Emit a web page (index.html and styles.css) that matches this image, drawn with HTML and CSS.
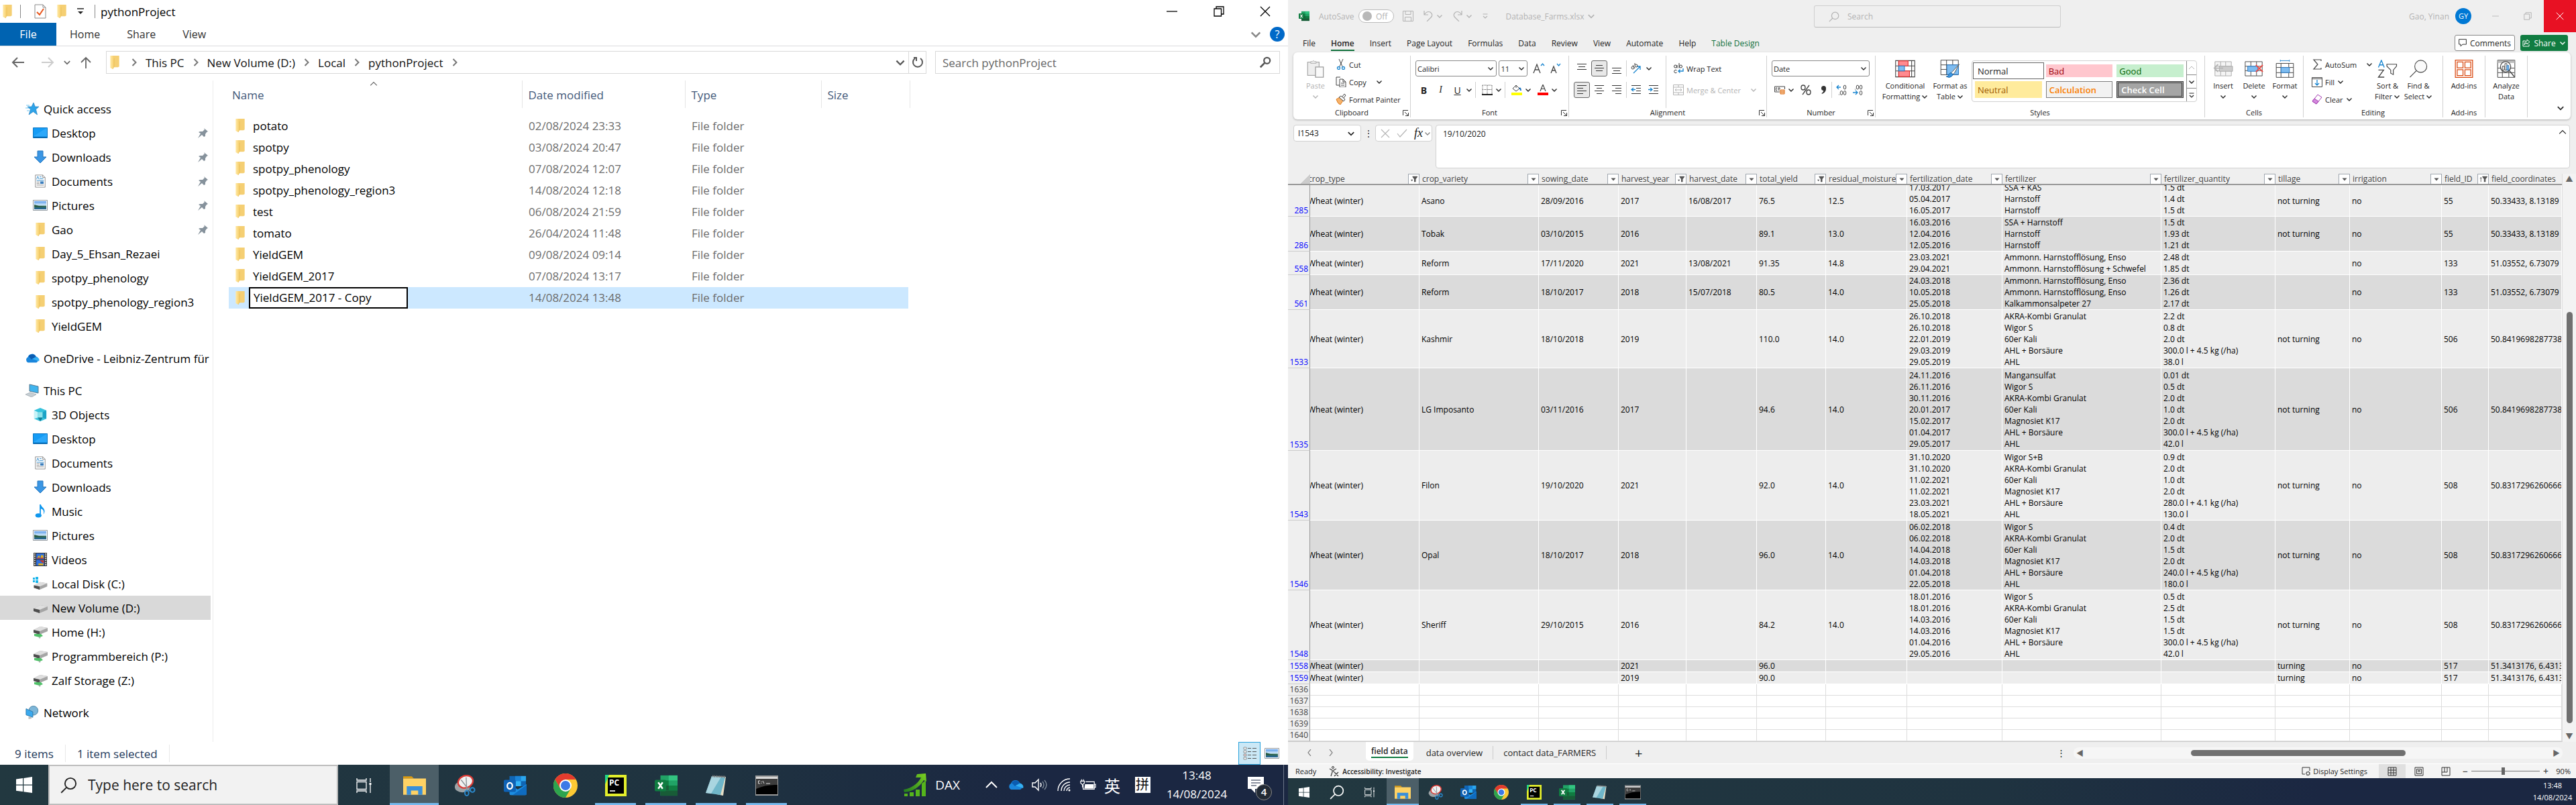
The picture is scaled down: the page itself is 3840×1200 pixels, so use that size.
FILE: index.html
```html
<!DOCTYPE html>
<html lang="en">
<head>
<meta charset="utf-8">
<title>pythonProject</title>
<link rel="stylesheet" href="styles.css">
</head>
<body>
<svg class="defs" aria-hidden="true">
  <linearGradient id="g-folder" x1="0" x2="1" y1="0" y2="0"><stop offset="0" stop-color="#ffe9a6"/><stop offset="1" stop-color="#f6cd68"/></linearGradient>
  <linearGradient id="g-sky" x1="0" x2="0" y1="0" y2="1"><stop offset="0" stop-color="#5a9bea"/><stop offset=".5" stop-color="#d6ebfa"/><stop offset=".6" stop-color="#3c7a6a"/><stop offset="1" stop-color="#1f5f9a"/></linearGradient>
  <linearGradient id="g-dax" x1="0" x2="1" y1="1" y2="0"><stop offset="0" stop-color="#1f7a1f"/><stop offset="1" stop-color="#7ed321"/></linearGradient>
  <symbol id="folder" viewBox="0 0 14 21"><path d="M3 0h11v17l-2 1H5z" fill="#f5cf73"/><path d="M0 0h4l2 4v13l-2 4-4-2z" fill="url(#g-folder)"/><path d="M4 21l2-4V4" fill="none" stroke="#e8bc55" stroke-width=".7"/></symbol>
  <symbol id="check-doc" viewBox="0 0 18 22"><path d="M1 1h12l4 4v16H1z" fill="#fff" stroke="#8a8a8a"/><path d="M13 1v4h4" fill="none" stroke="#8a8a8a"/><path d="M4 12l4 4 6-9" fill="none" stroke="#e8541a" stroke-width="2"/></symbol>
  <symbol id="chev-d" viewBox="0 0 10 10"><path d="M1.500 3.500L5 7l3.500-3.500" fill="none" stroke="currentColor" stroke-width="1.400"/></symbol>
  <symbol id="chev-u" viewBox="0 0 10 10"><path d="M1 7l4-4 4 4" fill="none" stroke="currentColor"/></symbol>
  <symbol id="chev-l" viewBox="0 0 10 10"><path d="M7 0L3 5l4 5" fill="none" stroke="currentColor" stroke-width="1.200"/></symbol>
  <symbol id="chev-r" viewBox="0 0 10 10"><path d="M3 0l4 5-4 5" fill="none" stroke="currentColor" stroke-width="1.200"/></symbol>
  <symbol id="crumb" viewBox="0 0 8 12"><path d="M1.500 1l5 5-5 5" fill="none" stroke="currentColor" stroke-width="2"/></symbol>
  <symbol id="arrow-l" viewBox="0 0 20 16"><path d="M19 8H2M9 1L2 8l7 7" fill="none" stroke="currentColor" stroke-width="2"/></symbol>
  <symbol id="arrow-r" viewBox="0 0 20 16"><path d="M1 8h17M11 1l7 7-7 7" fill="none" stroke="currentColor" stroke-width="2"/></symbol>
  <symbol id="arrow-u" viewBox="0 0 16 18"><path d="M8 18V2M1 9l7-7 7 7" fill="none" stroke="currentColor" stroke-width="1.800"/></symbol>
  <symbol id="reload" viewBox="0 0 18 18"><path d="M13 3a7 7 0 1 1-8 0M3 2h4v5" fill="none" stroke="currentColor" stroke-width="2"/></symbol>
  <symbol id="lens" viewBox="0 0 20 20"><circle cx="12" cy="8" r="6.500" fill="none" stroke="currentColor" stroke-width="1.500"/><path d="M7.500 12.500L1 19" stroke="currentColor" stroke-width="1.500"/></symbol>
  <symbol id="lens-b" viewBox="0 0 20 20"><circle cx="13" cy="7" r="5" fill="none" stroke="currentColor" stroke-width="2.500"/><path d="M9 11l-7 7" stroke="currentColor" stroke-width="3"/></symbol>
  <symbol id="min" viewBox="0 0 16 16"><path d="M0 8h16" stroke="currentColor" stroke-width="1.300"/></symbol>
  <symbol id="restore" viewBox="0 0 16 16"><path d="M1 4h10.500v11H1zM4 4V1h11v11h-3.500" fill="none" stroke="currentColor" stroke-width="1.300"/></symbol>
  <symbol id="close" viewBox="0 0 16 16"><path d="M1 1l14 14M15 1L1 15" stroke="currentColor" stroke-width="1.300"/></symbol>
  <symbol id="star" viewBox="0 0 22 20"><path d="M13 1l2.300 6H21l-4.500 4 2 8-6-4.500L6 19l2.500-8L4 7h6z" fill="#2ea3e8" stroke="#1877b8" stroke-width=".6"/><path d="M2 5h5M1 9h5M3 13h4" stroke="#6fc3ef" stroke-width="1.200"/></symbol>
  <symbol id="desktop" viewBox="0 0 22 16"><path d="M.5.5h21v15H.5z" fill="#159cf5" stroke="#0c77c4"/><path d="M1 13L20 1h1v12z" fill="#43b4ff" opacity=".5"/><path d="M1 14.500h20" stroke="#0a5c9c"/></symbol>
  <symbol id="download" viewBox="0 0 20 20"><path d="M6 1h8v9h5l-9 9-9-9h5z" fill="#3a96e4" stroke="#2174bd"/></symbol>
  <symbol id="document" viewBox="0 0 18 22"><path d="M1 1h12l4 4v16H1z" fill="#fff" stroke="#8a8a8a"/><path d="M13 1v4h4" fill="none" stroke="#8a8a8a"/><path d="M3 8l2-5 2 5M8 4h3M8 7h6M3 10h12" stroke="#2b88c9" fill="none"/><path d="M3 12.500h5M3 15h5M3 17.500h12" stroke="#888"/><path d="M9 11.500h5.500v4H9z" fill="#3b7dbb"/></symbol>
  <symbol id="picture" viewBox="0 0 22 16"><path d="M.5.5h21v15H.5z" fill="#fff" stroke="#8f979e"/><path d="M2 2h18v12H2z" fill="url(#g-sky)"/><path d="M2 7l7 2 11 1v1H2z" fill="#285c44"/></symbol>
  <symbol id="pin" viewBox="0 0 16 15"><path d="M10 0l6 5-2 1-2 3v3l-2 1-3-3-6 5 4-7-3-2 2-1h4l3-3z" fill="#86929c"/></symbol>
  <symbol id="cloud" viewBox="0 0 24 16"><path d="M5 15a5 5 0 0 1 0-9 7 7 0 0 1 13-1 5.500 5.500 0 0 1 1 10z" fill="#1a86dc"/><path d="M6 5a7 7 0 0 1 12 0l-7 5z" fill="#0b5cb0"/><path d="M12 9l7-3a5 5 0 0 1 4 7z" fill="#35b0f2"/></symbol>
  <symbol id="pc" viewBox="0 0 22 20"><path d="M7 1l13 3v10L7 11z" fill="#40b4ee" stroke="#56788e"/><path d="M1 16l7-3 9 3-7 4z" fill="#c6ced3" stroke="#8e9aa2" stroke-width=".6"/></symbol>
  <symbol id="cube" viewBox="0 0 22 22"><path d="M11 0l10 4v14l-10 4-10-4V4z" fill="#37c2dc"/><path d="M1 4l6 3v9l-6 2z" fill="#c7f3f7"/><path d="M7 7h8v9H7z" fill="#8ee2ea"/><path d="M15 7l6-3v14l-6-2z" fill="#1ba3c6"/><path d="M7 16h8l-4 6z" fill="#137c95"/></symbol>
  <symbol id="music" viewBox="0 0 18 22"><ellipse cx="6" cy="18" rx="5" ry="3.500" fill="#0f97ee"/><path d="M8 0h2c1 5 7 6 6 12-.5 2-1 3-2 4 2-6-1-8-4-9v11H8z" fill="#0f97ee"/></symbol>
  <symbol id="video" viewBox="0 0 22 22"><path d="M0 0h22v22H0z" fill="#333"/><path d="M2 1v20M20 1v20" stroke="#eee" stroke-width="2" stroke-dasharray="2 1.500"/><path d="M4.500 1h13v9.500h-13zM4.500 11.500h13V21h-13z" fill="#2f6fdc"/><path d="M6 8l3-4 2 4zM12 4h4v5h-4z" fill="#e2b21c"/><path d="M5 9h12M12 13h4v3z" stroke="#c6312b" stroke-width="1.500" fill="#e2b21c"/><path d="M8 19h8" stroke="#e2b21c" stroke-width="3"/></symbol>
  <symbol id="disk" viewBox="0 0 22 18"><path d="M1 10l10-5 11 2v5l-12 5-9-3z" fill="#a5a5a5"/><path d="M1 10l10-5 11 2-12 5z" fill="#dedede"/><path d="M1 10l9 2v5l-9-3z" fill="#4e4e4e"/></symbol>
  <symbol id="cdisk" viewBox="0 0 22 20"><use href="#disk" y="3" width="22" height="17"/><path d="M0 1h3v3H0zM4 0h4v4H4zM0 5h3v3H0zM4 5h4v4H4z" fill="#19b4ea"/></symbol>
  <symbol id="netdisk" viewBox="0 0 22 20"><use href="#disk" y="-3" width="22" height="18"/><path d="M2 13h10l3 3-5 2-8-2z" fill="#4fc168"/><path d="M8 17l4 1-2 2z" fill="#a4b2a8"/></symbol>
  <symbol id="network" viewBox="0 0 22 22"><circle cx="13" cy="8" r="7.500" fill="#7db6d8" stroke="#457f9f"/><path d="M1 5l11 5v9L1 15z" fill="#3aa9ee" stroke="#2c76a6"/><path d="M5 18l5 1v2l-5 1z" fill="#bbb"/></symbol>
  <symbol id="details" viewBox="0 0 22 22"><path d="M2 2h4v3H2zM2 7h4v3H2zM2 12h4v3H2zM2 17h4v3H2z" fill="#fff" stroke="#7a7a7a" stroke-width=".8"/><path d="M8 3.500h5m2 0h6M8 8.500h5m2 0h6M8 13.500h5m2 0h6M8 18.500h5m2 0h6" stroke="#555"/><path d="M3.500 13h1v1h-1z" fill="#c22"/></symbol>
  <symbol id="win" viewBox="0 0 24 24"><path d="M0 3.500l10-1.400v9.500H0zM11.200 1.900L24 0v11.600H11.200zM0 12.700h10v9.400L0 20.700zM11.200 12.700H24V24l-12.800-1.700z" fill="#fff"/></symbol>
  <symbol id="taskview" viewBox="0 0 24 24"><path d="M1 6.500h14v11H1zM1 1v3h14V1M1 23v-3h14v3M21 1v6M21 11v12" fill="none" stroke="#fff" stroke-width="1.300"/><path d="M19.500 8h3v3h-3z" fill="#fff"/></symbol>
  <symbol id="explorer" viewBox="0 0 32 28"><path d="M0 1h12l3 3H0z" fill="#d99a12"/><path d="M0 4h32v23H0z" fill="#ffd264"/><path d="M5 15h22v12h-6v-6h-10v6H5z" fill="#3a8fd9"/></symbol>
  <symbol id="snip" viewBox="0 0 34 34"><ellipse cx="13" cy="19" rx="12" ry="9" fill="#9da3a6"/><ellipse cx="18" cy="11" rx="12" ry="9.500" fill="#f1f1f1" stroke="#d83b36" stroke-width="2.500" transform="rotate(-20 18 11)"/><path d="M11 8l14 18M19 4l1 22" stroke="#8d9499" stroke-width="1.500"/><circle cx="29" cy="24" r="3.500" fill="none" stroke="#2a8bd0" stroke-width="2"/><ellipse cx="20" cy="29" rx="3" ry="4" fill="none" stroke="#2a8bd0" stroke-width="2"/></symbol>
  <symbol id="outlook" viewBox="0 0 36 32"><path d="M9 1h26v16H9z" fill="#1066b5"/><path d="M18 1h9v8h-9z" fill="#1a84d8"/><path d="M27 1h8v8h-8z" fill="#2aa6ee"/><path d="M18 9h9v8h-9z" fill="#32b4f8"/><path d="M9 14l13 8 14-8v15q0 2-2 2H11q-2 0-2-2z" fill="#1c8ee2"/><path d="M14 31l22-16v14q0 2-2 2z" fill="#0f6cc0"/><rect y="7" width="19" height="19" rx="2" fill="#0f62b4"/><ellipse cx="9.500" cy="16.500" rx="4" ry="4.800" fill="none" stroke="#fff" stroke-width="2.400"/></symbol>
  <symbol id="chrome" viewBox="0 0 36 36"><circle cx="18" cy="18" r="18" fill="#fcc934"/><path d="M18 9h15.600A18 18 0 0 0 2.400 9l7.800 13.500z" fill="#e33b2e"/><path d="M2.400 9A18 18 0 0 0 18 36l7.800-13.500h-15.600z" fill="#2da44e"/><circle cx="18" cy="18" r="9" fill="#fff"/><circle cx="18" cy="18" r="7" fill="#3c79e6"/></symbol>
  <symbol id="pycharm" viewBox="0 0 32 32"><path d="M0 0h32v32H0z" fill="#21d789"/><path d="M6 0h26v32H0V14z" fill="#e3ee2c"/><path d="M4 4h24v24H4z" fill="#000"/><path d="M7 24h8" stroke="#fff" stroke-width="1.600"/><text x="6" y="16" font-family="Open Sans, sans-serif" font-weight="700" font-size="12" fill="#fff">PC</text></symbol>
  <symbol id="excel" viewBox="0 0 36 32"><path d="M9 0h27v32H9z" fill="#21a366"/><path d="M22 0h14v8H22z" fill="#33c481"/><path d="M9 8h13v8H9z" fill="#107c41"/><path d="M9 16h27v8H9z" fill="#185c37"/><path d="M22 16h14v8H22z" fill="#107c41"/><path d="M9 24h27v8H9z" fill="#185c37"/><rect y="7" width="18" height="18" rx="2" fill="#107c41"/><path d="M5.500 11l7 10M12.500 11l-7 10" stroke="#fff" stroke-width="2.600"/></symbol>
  <symbol id="notepad" viewBox="0 0 34 32"><path d="M11 2l20 1-4 28-10-2z" fill="#e6ddc5"/><path d="M10 2l20 2-7 26L1 27z" fill="#6fb6c9"/><path d="M10 2l14 1-15 25-8-1z" fill="#c2e3ea" opacity=".7"/><path d="M11 2l19 1" stroke="#777" stroke-width="3" stroke-dasharray="1.500 1"/></symbol>
  <symbol id="cmd" viewBox="0 0 34 28"><path d="M0 0h34v28H0z" fill="#000" stroke="#9a9a9a" stroke-width="2"/><path d="M1 1h32v3H1z" fill="#d7d7d7"/><path d="M1 4h32v9Q16 12 1 19z" fill="#3d3d3d"/><path d="M7 7H4.500v4H7M9 8v1M9 10v1M11 7l2 4M16 11h6" fill="none" stroke="#ddd"/></symbol>
  <symbol id="dax" viewBox="0 0 34 34"><path d="M0 24C13 22 22 14 26 6h-8l2-5 13-1 1 12-4-2C24 20 14 27 1 28z" fill="url(#g-dax)"/><path d="M1 30h5v4H1zM9 28h6v6H9zM18 24h6v10h-6zM27 15l6-5v24h-6z" fill="#55b51c"/></symbol>
  <symbol id="volume" viewBox="0 0 24 20"><path d="M1 7h4l5-5v16l-5-5H1z" fill="none" stroke="#fff" stroke-width="1.400"/><path d="M13 7q2 3 0 6" fill="none" stroke="#fff" stroke-width="1.400"/><path d="M16 5q4 5 0 10M19 3q6 7 0 14" fill="none" stroke="#7c8996" stroke-width="1.400"/></symbol>
  <symbol id="wifi" viewBox="0 0 20 20"><path d="M1 19A18 18 0 0 1 19 1M6 19A13 13 0 0 1 19 6M10 19a9 9 0 0 1 9-9M14 19a5 5 0 0 1 5-5" fill="none" stroke="#fff" stroke-width="1.400"/><circle cx="18" cy="18" r="1.500" fill="#fff"/></symbol>
  <symbol id="battery" viewBox="0 0 26 18"><path d="M9 4h14v12H5V9M23 8h2v5h-2M1 3h6v3l-3 3-3-3zM2.500 0v3M5.500 0v3M4 9v4" fill="none" stroke="#fff" stroke-width="1.300"/><path d="M8 8h14v7H7z" fill="#fff"/></symbol>
  <symbol id="note" viewBox="0 0 24 24"><path d="M0 0h24v18H11v6l-6-6H0z" fill="#fff"/><path d="M5 5h14M5 9h14M5 13h8" stroke="#1b2742"/></symbol>
  <symbol id="save" viewBox="0 0 16 16"><path d="M.5.500h15v15H.5zM4 .500v5h8v-5M3.500 15.500v-6h9v6" fill="none" stroke="currentColor"/></symbol>
  <symbol id="undo" viewBox="0 0 16 16"><path d="M2 0v6h6M2 6q4-6 9-4 5 4 1 8l-6 6" fill="none" stroke="currentColor" stroke-width="1.200"/></symbol>
  <symbol id="redo" viewBox="0 0 16 16"><path d="M14 0v6H8M14 6q-4-6-9-4-5 4-1 8l6 6" fill="none" stroke="currentColor" stroke-width="1.200"/></symbol>
  <symbol id="custom" viewBox="0 0 10 10"><path d="M1.500 2h7M2 5l3 3 3-3" fill="none" stroke="currentColor" stroke-width="1.200"/></symbol>
  <symbol id="quick" viewBox="0 0 10 10"><path d="M0 1h10" stroke="currentColor" stroke-width="1.500"/><path d="M1 5h8L5 9z" fill="currentColor"/></symbol>
  <symbol id="paste" viewBox="0 0 28 30"><path d="M1 4h19v22H1z" fill="#eee" stroke="#aaa" stroke-width="1.400"/><path d="M6 6V3h3q1-3 3 0h3v3z" fill="#eee" stroke="#aaa"/><path d="M14 12h13v17H14z" fill="#fafafa" stroke="#9c9c9c" stroke-width="1.400"/></symbol>
  <symbol id="cut" viewBox="0 0 16 16"><path d="M5 0l5.500 12M11 0L5.500 12" stroke="#444" fill="none"/><circle cx="4.500" cy="13.500" r="2" fill="none" stroke="#1a86d0" stroke-width="1.300"/><circle cx="11.500" cy="13.500" r="2" fill="none" stroke="#1a86d0" stroke-width="1.300"/></symbol>
  <symbol id="copy" viewBox="0 0 16 16"><path d="M6 13H1V1h6M6 4h5l4 4v8H6zM11 4v4h4M8 10h5M8 13h5" fill="none" stroke="#444"/></symbol>
  <symbol id="brush" viewBox="0 0 16 16"><path d="M1 8l5-3 5 5-4 6q-4-1-6-8z" fill="#f6b26b" stroke="#dd7a1a"/><path d="M5 5l3-2 6 5-2 3zM10 4l3-4 2 2-3 4" fill="#fff" stroke="#444"/></symbol>
  <symbol id="grow" viewBox="0 0 18 16"><path d="M1 15L6 2l5 13M3 10h6" fill="none" stroke="#444" stroke-width="1.300"/><path d="M12 4l2.500-3L17 4" fill="none" stroke="#1a86d0" stroke-width="1.300"/></symbol>
  <symbol id="shrink" viewBox="0 0 18 16"><path d="M2 15L6 5l4 10M3.500 11h5" fill="none" stroke="#444" stroke-width="1.300"/><path d="M11 1l2.500 3L16 1" fill="none" stroke="#1a86d0" stroke-width="1.300"/></symbol>
  <symbol id="borders" viewBox="0 0 16 16"><path d="M1 1h14v13M1 1v13M8 1v13M1 7.500h14" fill="none" stroke="#444" stroke-dasharray="1 1"/><path d="M0 15h16" stroke="#222" stroke-width="2"/></symbol>
  <symbol id="fill" viewBox="0 0 16 16"><path d="M7 1L2 6l5 4 5-4zM7 1v4" fill="none" stroke="#444"/><path d="M12 5q2 1 2 4" stroke="#1a70c0" stroke-width="2" fill="none"/><path d="M0 12h16v4H0z" fill="#ff0"/></symbol>
  <symbol id="fcolor" viewBox="0 0 16 16"><path d="M4 10l4-10 4 10M5.500 6.500h5" fill="none" stroke="#444" stroke-width="1.200"/><path d="M0 12h16v4H0z" fill="#f00"/></symbol>
  <symbol id="al-top" viewBox="0 0 16 16"><path d="M1 1.500h14M3 5.500h10M1 9.500h14" stroke="#333"/></symbol>
  <symbol id="al-mid" viewBox="0 0 16 16"><path d="M3 3.500h10M1 7.500h14M3 11.500h10" stroke="#333"/></symbol>
  <symbol id="al-bot" viewBox="0 0 16 16"><path d="M1 7.500h14M3 11.500h10M1 15.500h14" stroke="#333"/></symbol>
  <symbol id="al-l" viewBox="0 0 16 16"><path d="M1 1.500h14M1 5.500h9M1 9.500h14M1 13.500h9" stroke="#333"/></symbol>
  <symbol id="al-c" viewBox="0 0 16 16"><path d="M1 1.500h14M4 5.500h8M1 9.500h14M4 13.500h8" stroke="#333"/></symbol>
  <symbol id="al-r" viewBox="0 0 16 16"><path d="M1 1.500h14M6 5.500h9M1 9.500h14M6 13.500h9" stroke="#333"/></symbol>
  <symbol id="orient" viewBox="0 0 16 16"><path d="M4 15L14 5M9 5h5v5" fill="none" stroke="#1a86d0" stroke-width="1.300"/><circle cx="3" cy="7" r="2" fill="none" stroke="#444"/><circle cx="8" cy="4" r="2" fill="none" stroke="#444"/><path d="M3 3l3 5M6 0v3" stroke="#444"/></symbol>
  <symbol id="outdent" viewBox="0 0 16 16"><path d="M1 1.500h14M8 5.500h7M8 9.500h7M1 13.500h14" stroke="#333"/><path d="M7 7.500H1M4 5L1 7.500 4 10" fill="none" stroke="#1a86d0" stroke-width="1.300"/></symbol>
  <symbol id="indent" viewBox="0 0 16 16"><path d="M1 1.500h14M8 5.500h7M8 9.500h7M1 13.500h14" stroke="#333"/><path d="M0 7.500h6M3 5l3 2.500L3 10" fill="none" stroke="#1a86d0" stroke-width="1.300"/></symbol>
  <symbol id="wrap" viewBox="0 0 16 16"><circle cx="3.500" cy="5" r="2" fill="none" stroke="#333"/><path d="M6 3v4.500M9 0v7.500M5.500 11a2.200 2.200 0 1 0 0 3" stroke="#333" fill="none"/><circle cx="11.500" cy="5" r="2" fill="none" stroke="#333"/><path d="M15 8v4H8M10.500 9.500L8 12l2.500 2.500" fill="none" stroke="#1a86d0" stroke-width="1.400"/></symbol>
  <symbol id="merge" viewBox="0 0 16 16"><path d="M.5.500h15v15H.5zM.5 4h15M.5 12h15M8 0v4M8 12v4M3 8h10M5 6L3 8l2 2M11 6l2 2-2 2" fill="none" stroke="currentColor"/></symbol>
  <symbol id="money" viewBox="0 0 16 16"><path d="M.5 3h15v8H.5z" fill="none" stroke="#444"/><path d="M4 5H2.500v4H4M6 9V5h2v4" fill="none" stroke="#444"/><path d="M8 7h8v8H8z" fill="#fff"/><path d="M9 8h6v6H9zM9 10h6M9 12h6" fill="#fde3c8" stroke="#dd6b10"/></symbol>
  <symbol id="percent" viewBox="0 0 16 16"><ellipse cx="4" cy="4.500" rx="3" ry="3.500" fill="none" stroke="#444" stroke-width="1.400"/><ellipse cx="12" cy="11.500" rx="3" ry="3.500" fill="none" stroke="#444" stroke-width="1.400"/><path d="M13 1L3 15" stroke="#444" stroke-width="1.300"/></symbol>
  <symbol id="comma" viewBox="0 0 16 16"><circle cx="8.500" cy="5.500" r="3.500" fill="#333"/><path d="M12 6q0 6-6 8l-.5-1q3-2 3-5z" fill="#333"/></symbol>
  <symbol id="dec-more" viewBox="0 0 16 16"><path d="M7 4H1M4 1L1 4l3 3" fill="none" stroke="#1a86d0" stroke-width="1.300"/><ellipse cx="13" cy="4" rx="1.800" ry="3" fill="none" stroke="#444"/><ellipse cx="8" cy="12.500" rx="1.800" ry="3" fill="none" stroke="#444"/><ellipse cx="13" cy="12.500" rx="1.800" ry="3" fill="none" stroke="#444"/><path d="M4 15h1" stroke="#444"/></symbol>
  <symbol id="dec-less" viewBox="0 0 16 16"><path d="M1 12h7M5 9l3 3-3 3" fill="none" stroke="#1a86d0" stroke-width="1.300"/><ellipse cx="13" cy="4" rx="1.800" ry="3" fill="none" stroke="#444"/><ellipse cx="8" cy="4" rx="1.800" ry="3" fill="none" stroke="#444"/><ellipse cx="13" cy="12.500" rx="1.800" ry="3" fill="none" stroke="#444"/><path d="M4 7h1" stroke="#444"/></symbol>
  <symbol id="launch" viewBox="0 0 9 9"><path d="M.5 8V.500H8M3 3l5 5M8.500 4v4.500H4" fill="none" stroke="#333"/></symbol>
  <symbol id="cond" viewBox="0 0 28 24"><path d="M.7.700h26.600v22.600H.7zM.7 8h26.600M.7 15h26.600M5 .700V23M23 .700V23" fill="#fff" stroke="#444"/><path d="M5 1h13v7H5zM5 15h15v8H5z" fill="#ff8a8f" stroke="#e02b2b"/><path d="M5 8h8v7H5z" fill="#7ebcf0" stroke="#2b78c0"/></symbol>
  <symbol id="ftable" viewBox="0 0 30 28"><path d="M.7.700h27v22.600H.7zM.7 8h27M.7 15h27M9.500 .700V23M19 .700V23" fill="#fff" stroke="#444"/><path d="M10 8h18v15H10z" fill="#7ebcf0" stroke="#2b78c0"/><path d="M29 7L19 18l-3 3 3 2 3-3z" fill="#fff" stroke="#555"/><path d="M16 20q-3 1-4 5-2 1-3 1 5 3 8 0 3-2 2-4z" fill="#3c95e0" stroke="#1a67a8"/></symbol>
  <symbol id="insert" viewBox="0 0 32 24"><path d="M3 .7h26v22.600H3zM3 8h26M3 15h26M12 .7V23M20 .7V23" fill="#f4f4f4" stroke="#aaa"/><path d="M10 8h21v8H10z" fill="#ccc" stroke="#aaa"/><path d="M16 11H2M8 5l-6 6 6 6" fill="none" stroke="#b4b4b4" stroke-width="2"/></symbol>
  <symbol id="delete" viewBox="0 0 32 24"><path d="M2 .7h27v22.600H2zM2 8h27M2 15h27M11 .7V23M20 .7V23" fill="#fff" stroke="#444"/><path d="M6 8h16v8H6z" fill="#7ebcf0" stroke="#2b78c0"/><path d="M19 6l11 11M30 6L19 17" stroke="#ee4a43" stroke-width="2"/></symbol>
  <symbol id="format" viewBox="0 0 28 28"><path d="M.7 5.700h26.600v21.600H.7zM.7 12h26.600M.7 20h26.600M8 5.700V27M20 5.700V27" fill="#fff" stroke="#444"/><path d="M8 12h13v8H8z" fill="#7ebcf0" stroke="#2b78c0"/><path d="M7 1.500h14M7 0v3M21 0v3" stroke="#2b88d0"/></symbol>
  <symbol id="sigma" viewBox="0 0 16 16"><path d="M14 3V1H3l6 7-6 7h11v-2" fill="none" stroke="#444" stroke-width="1.200"/></symbol>
  <symbol id="filldown" viewBox="0 0 16 16"><path d="M.5 1.500h15v14H.5zM.5 3.500h15" fill="none" stroke="#444"/><path d="M8 5v8M5 10l3 3 3-3" fill="none" stroke="#1a86d0" stroke-width="1.300"/></symbol>
  <symbol id="eraser" viewBox="0 0 16 16"><path d="M9 1l6 4-8 10-6-4z" fill="#fff" stroke="#a33bb0"/><path d="M4 7l6 4-3 4-6-4z" fill="#d48ade" stroke="#a33bb0"/></symbol>
  <symbol id="sort" viewBox="0 0 30 28"><path d="M1 12L5.500 1 10 12M3 8h5" fill="none" stroke="#1a86d0" stroke-width="1.400"/><path d="M1 16h8L1 27h9" fill="none" stroke="#444" stroke-width="1.400"/><path d="M14 7h15v3l-5 6v7l-4-2v-5l-6-6z" fill="#fff" stroke="#444" stroke-width="1.200"/></symbol>
  <symbol id="find" viewBox="0 0 30 30"><circle cx="19" cy="11" r="10" fill="#fafafa" stroke="#444" stroke-width="1.200"/><path d="M12 18L1 29" stroke="#444" stroke-width="1.300"/></symbol>
  <symbol id="addins" viewBox="0 0 28 28"><path d="M.7.700h26.600v26.600H.7zM3.500 3.500h9v9h-9zM15.500 3.500h9v9h-9zM3.500 15.500h9v9h-9zM15.500 15.500h9v9h-9z" fill="none" stroke="#d9480f" stroke-width="1.300"/></symbol>
  <symbol id="analyze" viewBox="0 0 28 28"><path d="M.7.700h26.600v26.600H.7zM.7 13h26M.7 20h26M8 5v22M18 5v22" fill="#fff" stroke="#444"/><path d="M1 1h26v4H1z" fill="#bbb"/><circle cx="13" cy="11" r="8" fill="#fff" stroke="#444" stroke-width="1.300"/><path d="M19 17l8 10" stroke="#444" stroke-width="1.500"/><path d="M8 10h3v6H8zM12 6h3v10h-3z" fill="#fff" stroke="#444"/><path d="M15 9h3v7h-3z" fill="#7ebcf0" stroke="#2b78c0"/></symbol>
  <symbol id="bubble" viewBox="0 0 12 12"><path d="M.6.600h10.800v7.500H6L3 11V8H.6z" fill="none" stroke="#333"/></symbol>
  <symbol id="share" viewBox="0 0 12 12"><path d="M5 3H1v8h9V8M7 1l4 3.500L7 8V6q-3 0-4 3 0-5 4-6z" fill="none" stroke="#fff"/></symbol>
  <symbol id="x-ico" viewBox="0 0 14 14"><path d="M1 1l12 12M13 1L1 13" stroke="#b5b5b5" stroke-width="1.200"/></symbol>
  <symbol id="v-ico" viewBox="0 0 16 14"><path d="M1 7l4 5L15 1" fill="none" stroke="#b5b5b5" stroke-width="1.200"/></symbol>
  <symbol id="dd" viewBox="0 0 10 10"><path d="M1.500 3.500h7L5 7.500z" fill="#555"/></symbol>
  <symbol id="funnel" viewBox="0 0 14 12"><path d="M4 1h9v1l-3 4v5H7V6L4 2z" fill="#555"/><path d="M1 7l4 0-2 3z" fill="#555"/></symbol>
  <symbol id="funnel-s" viewBox="0 0 14 12"><path d="M5 1h9v1l-3 4v5H8V6L5 2z" fill="#555"/><path d="M2.500 11V3M1 5l1.500-2L4 5" fill="none" stroke="#555"/></symbol>
  <symbol id="access" viewBox="0 0 16 16"><circle cx="6" cy="2" r="1.500" fill="none" stroke="#333"/><path d="M1 4l4 2v3l-2 6M11 4L7 6v3M8 9l6 6M14 9l-6 6" fill="none" stroke="#333" stroke-width="1.200"/></symbol>
  <symbol id="display" viewBox="0 0 14 14"><path d="M5 11H1V1h11v5" fill="none" stroke="#333"/><circle cx="9.500" cy="10" r="2.500" fill="none" stroke="#333" stroke-width="1.600" stroke-dasharray="1.600 .6"/></symbol>
  <symbol id="v-grid" viewBox="0 0 14 14"><path d="M1 1h12v12H1zM1 5h12M1 9h12M5 1v12M9 1v12" fill="none" stroke="#333"/></symbol>
  <symbol id="v-page" viewBox="0 0 14 14"><path d="M1 1h12v12H1zM3.500 3.500h7v7h-7zM5 5.500h4M5 7.500h4" fill="none" stroke="#333"/></symbol>
  <symbol id="v-break" viewBox="0 0 14 14"><path d="M1 1h12v12H1zM5 1v7h4V1M1 8h4" fill="none" stroke="#333"/></symbol>
</svg>

<main class="screens">
<section class="screen">
  <div class="explorer">
    <header class="x-title">
      <svg class="i-folder"><use href="#folder"/></svg><i class="tick"></i>
      <svg class="i-doc"><use href="#check-doc"/></svg>
      <svg class="i-folder"><use href="#folder"/></svg>
      <svg class="i-10 dark"><use href="#quick"/></svg><i class="tick"></i>
      <h1>pythonProject</h1>
      <div class="win-controls">
        <button aria-label="Minimize"><svg class="i-16"><use href="#min"/></svg></button>
        <button aria-label="Restore"><svg class="i-16"><use href="#restore"/></svg></button>
        <button aria-label="Close"><svg class="i-16"><use href="#close"/></svg></button>
      </div>
    </header>
    <nav class="x-tabs">
      <button class="file">File</button><button>Home</button><button>Share</button><button>View</button>
      <span class="x-help"><svg class="i-18"><use href="#chev-d"/></svg><button class="help" aria-label="Help">?</button></span>
    </nav>
    <div class="x-address">
      <div class="x-nav">
        <button aria-label="Back"><svg class="i-20"><use href="#arrow-l"/></svg></button>
        <button aria-label="Forward" class="off"><svg class="i-20"><use href="#arrow-r"/></svg></button>
        <button aria-label="Recent" class="slim"><svg class="i-12"><use href="#chev-d"/></svg></button>
        <button aria-label="Up" class="slim"><svg class="i-18"><use href="#arrow-u"/></svg></button>
      </div>
      <div class="x-path">
        <svg class="i-folder"><use href="#folder"/></svg>
        <svg class="crumb"><use href="#crumb"/></svg><a href="#pc">This PC</a>
        <svg class="crumb"><use href="#crumb"/></svg><a href="#d">New Volume (D:)</a>
        <svg class="crumb"><use href="#crumb"/></svg><a href="#local">Local</a>
        <svg class="crumb"><use href="#crumb"/></svg><a href="#project">pythonProject</a>
        <svg class="crumb"><use href="#crumb"/></svg>
        <svg class="i-16 push"><use href="#chev-d"/></svg>
        <button class="reload" aria-label="Refresh"><svg class="i-18"><use href="#reload"/></svg></button>
      </div>
      <label class="x-search"><input type="search" placeholder="Search pythonProject" aria-label="Search pythonProject"><svg class="i-18"><use href="#lens-b"/></svg></label>
    </div>
    <div class="x-body">
      <nav class="tree">
        <ul>
          <li class="root"><svg><use href="#star"/></svg>Quick access</li>
          <li><svg><use href="#desktop"/></svg>Desktop<svg class="pin"><use href="#pin"/></svg></li>
          <li><svg><use href="#download"/></svg>Downloads<svg class="pin"><use href="#pin"/></svg></li>
          <li><svg><use href="#document"/></svg>Documents<svg class="pin"><use href="#pin"/></svg></li>
          <li><svg><use href="#picture"/></svg>Pictures<svg class="pin"><use href="#pin"/></svg></li>
          <li><svg><use href="#folder"/></svg>Gao<svg class="pin"><use href="#pin"/></svg></li>
          <li><svg><use href="#folder"/></svg>Day_5_Ehsan_Rezaei</li>
          <li><svg><use href="#folder"/></svg>spotpy_phenology</li>
          <li><svg><use href="#folder"/></svg>spotpy_phenology_region3</li>
          <li><svg><use href="#folder"/></svg>YieldGEM</li>
        </ul>
        <ul><li class="root"><svg><use href="#cloud"/></svg>OneDrive - Leibniz-Zentrum für</li></ul>
        <ul>
          <li class="root"><svg><use href="#pc"/></svg>This PC</li>
          <li><svg><use href="#cube"/></svg>3D Objects</li>
          <li><svg><use href="#desktop"/></svg>Desktop</li>
          <li><svg><use href="#document"/></svg>Documents</li>
          <li><svg><use href="#download"/></svg>Downloads</li>
          <li><svg><use href="#music"/></svg>Music</li>
          <li><svg><use href="#picture"/></svg>Pictures</li>
          <li><svg><use href="#video"/></svg>Videos</li>
          <li><svg><use href="#cdisk"/></svg>Local Disk (C:)</li>
          <li class="current"><svg><use href="#disk"/></svg>New Volume (D:)</li>
          <li><svg><use href="#netdisk"/></svg>Home (H:)</li>
          <li><svg><use href="#netdisk"/></svg>Programmbereich (P:)</li>
          <li><svg><use href="#netdisk"/></svg>Zalf Storage (Z:)</li>
        </ul>
        <ul><li class="root"><svg><use href="#network"/></svg>Network</li></ul>
      </nav>
      <div class="files-pane">
        <table class="files">
          <colgroup><col class="f-name"><col class="f-date"><col class="f-type"><col class="f-size"></colgroup>
          <thead><tr><th>Name<svg class="sorted"><use href="#chev-u"/></svg></th><th>Date modified</th><th>Type</th><th>Size</th></tr></thead>
          <tbody>
            <tr><td><svg class="i-folder"><use href="#folder"/></svg>potato</td><td>02/08/2024 23:33</td><td>File folder</td><td></td></tr>
            <tr><td><svg class="i-folder"><use href="#folder"/></svg>spotpy</td><td>03/08/2024 20:47</td><td>File folder</td><td></td></tr>
            <tr><td><svg class="i-folder"><use href="#folder"/></svg>spotpy_phenology</td><td>07/08/2024 12:07</td><td>File folder</td><td></td></tr>
            <tr><td><svg class="i-folder"><use href="#folder"/></svg>spotpy_phenology_region3</td><td>14/08/2024 12:18</td><td>File folder</td><td></td></tr>
            <tr><td><svg class="i-folder"><use href="#folder"/></svg>test</td><td>06/08/2024 21:59</td><td>File folder</td><td></td></tr>
            <tr><td><svg class="i-folder"><use href="#folder"/></svg>tomato</td><td>26/04/2024 11:48</td><td>File folder</td><td></td></tr>
            <tr><td><svg class="i-folder"><use href="#folder"/></svg>YieldGEM</td><td>09/08/2024 09:14</td><td>File folder</td><td></td></tr>
            <tr><td><svg class="i-folder"><use href="#folder"/></svg>YieldGEM_2017</td><td>07/08/2024 13:17</td><td>File folder</td><td></td></tr>
            <tr class="selected"><td><svg class="i-folder"><use href="#folder"/></svg><input class="rename" value="YieldGEM_2017 - Copy" aria-label="Folder name"></td><td>14/08/2024 13:48</td><td>File folder</td><td></td></tr>
          </tbody>
        </table>
      </div>
    </div>
    <footer class="x-status">
      <span>9 items</span><span>1 item selected</span>
      <div class="x-views"><button class="on" aria-label="Details"><svg><use href="#details"/></svg></button><button aria-label="Large icons"><svg><use href="#picture"/></svg></button></div>
    </footer>
  </div>
  <footer class="taskbar">
    <button class="start" aria-label="Start"><svg class="i-24"><use href="#win"/></svg></button>
    <label class="t-search"><svg><use href="#lens"/></svg><input type="search" placeholder="Type here to search" aria-label="Type here to search"></label>
    <div class="apps">
      <button aria-label="Task view"><svg class="i-24"><use href="#taskview"/></svg></button>
      <button class="active" aria-label="File Explorer"><svg><use href="#explorer"/></svg></button>
      <button aria-label="Snipping Tool"><svg><use href="#snip"/></svg></button>
      <button aria-label="Outlook"><svg><use href="#outlook"/></svg></button>
      <button aria-label="Chrome"><svg class="i-36"><use href="#chrome"/></svg></button>
      <button class="open" aria-label="PyCharm"><svg><use href="#pycharm"/></svg></button>
      <button class="open" aria-label="Excel"><svg><use href="#excel"/></svg></button>
      <button class="open" aria-label="Notepad"><svg><use href="#notepad"/></svg></button>
      <button class="open" aria-label="Command Prompt"><svg><use href="#cmd"/></svg></button>
    </div>
    <div class="tray">
      <button class="dax"><svg><use href="#dax"/></svg>DAX</button>
      <button aria-label="Hidden icons"><svg class="i-20"><use href="#chev-u"/></svg></button>
      <button aria-label="OneDrive"><svg class="i-24"><use href="#cloud"/></svg></button>
      <button aria-label="Volume"><svg class="i-24"><use href="#volume"/></svg></button>
      <button aria-label="Network"><svg class="i-20"><use href="#wifi"/></svg></button>
      <button aria-label="Battery"><svg class="i-24"><use href="#battery"/></svg></button>
      <button class="ime">英</button>
      <button class="ime2"><span>拼</span></button>
      <div class="clock"><span>13:48</span><span>14/08/2024</span></div>
      <button class="notes" aria-label="Notifications"><svg class="i-24"><use href="#note"/></svg><b>4</b></button>
    </div>
  </footer>
</section>

<section class="screen">
  <div class="excel">
    <header class="e-title">
      <div class="e-quick">
        <svg class="i-16"><use href="#excel"/></svg>
        <label class="autosave">AutoSave<span class="switch"><input type="checkbox"><i></i>Off</span></label>
        <svg class="i-16"><use href="#save"/></svg>
        <span class="pair"><svg class="i-16"><use href="#undo"/></svg><svg class="i-10"><use href="#chev-d"/></svg></span>
        <span class="pair"><svg class="i-16"><use href="#redo"/></svg><svg class="i-10"><use href="#chev-d"/></svg></span>
        <svg class="i-10"><use href="#custom"/></svg>
        <span class="doc-name">Database_Farms.xlsx<svg class="i-12"><use href="#chev-d"/></svg></span>
      </div>
      <label class="e-search"><svg class="i-16"><use href="#lens"/></svg><input type="search" placeholder="Search" aria-label="Search"></label>
      <div class="e-user">
        Gao, Yinan<span class="avatar">GY</span>
        <button aria-label="Minimize"><svg class="i-10"><use href="#min"/></svg></button>
        <button aria-label="Restore"><svg class="i-12"><use href="#restore"/></svg></button>
        <button class="shut" aria-label="Close"><svg class="i-12"><use href="#close"/></svg></button>
      </div>
    </header>
    <nav class="e-tabs">
      <button>File</button><button class="on">Home</button><button>Insert</button><button>Page Layout</button><button>Formulas</button><button>Data</button><button>Review</button><button>View</button><button>Automate</button><button>Help</button><button class="context">Table Design</button>
      <div class="e-share"><button class="comments"><svg class="i-12"><use href="#bubble"/></svg>Comments</button><button class="share"><svg class="i-12"><use href="#share"/></svg>Share<svg class="i-10"><use href="#chev-d"/></svg></button></div>
    </nav>
    <div class="ribbon">
      <div class="group g-clip">
        <div class="g-body">
          <button class="big off"><svg class="ic"><use href="#paste"/></svg>Paste<svg class="i-10"><use href="#chev-d"/></svg></button>
          <div class="stack">
            <button><svg class="i-16"><use href="#cut"/></svg>Cut</button>
            <button><svg class="i-16"><use href="#copy"/></svg>Copy<svg class="i-10 far"><use href="#chev-d"/></svg></button>
            <button><svg class="i-16"><use href="#brush"/></svg>Format Painter</button>
          </div>
        </div>
        <div class="g-label">Clipboard<svg><use href="#launch"/></svg></div>
      </div>
      <div class="group g-font">
        <div class="g-body rows">
          <div class="line">
            <span class="combo w-font"><select aria-label="Font"><option>Calibri</option></select><svg class="i-10"><use href="#chev-d"/></svg></span>
            <span class="combo w-size"><select aria-label="Font size"><option>11</option></select><svg class="i-10"><use href="#chev-d"/></svg></span>
            <button class="ib" aria-label="Increase font size"><svg class="i-18"><use href="#grow"/></svg></button><button class="ib" aria-label="Decrease font size"><svg class="i-18"><use href="#shrink"/></svg></button>
          </div>
          <div class="line">
            <button class="ib"><b>B</b></button><button class="ib"><em>I</em></button><button class="ib"><u>U</u></button><svg class="i-10"><use href="#chev-d"/></svg><i class="vr"></i>
            <button class="ib" aria-label="Borders"><svg class="i-16"><use href="#borders"/></svg></button><svg class="i-10"><use href="#chev-d"/></svg><i class="vr"></i>
            <button class="ib" aria-label="Fill color"><svg class="i-16"><use href="#fill"/></svg></button><svg class="i-10"><use href="#chev-d"/></svg>
            <button class="ib" aria-label="Font color"><svg class="i-16"><use href="#fcolor"/></svg></button><svg class="i-10"><use href="#chev-d"/></svg>
          </div>
        </div>
        <div class="g-label">Font<svg><use href="#launch"/></svg></div>
      </div>
      <div class="group g-align">
        <div class="g-body">
          <div class="rows">
            <div class="line">
              <button class="ib" aria-label="Top align"><svg class="i-16"><use href="#al-top"/></svg></button><button class="ib on" aria-label="Middle align"><svg class="i-16"><use href="#al-mid"/></svg></button><button class="ib" aria-label="Bottom align"><svg class="i-16"><use href="#al-bot"/></svg></button><i class="vr thin"></i>
              <button class="ib" aria-label="Orientation"><svg class="i-16"><use href="#orient"/></svg></button><svg class="i-10"><use href="#chev-d"/></svg>
            </div>
            <div class="line">
              <button class="ib on" aria-label="Align left"><svg class="i-16"><use href="#al-l"/></svg></button><button class="ib" aria-label="Center"><svg class="i-16"><use href="#al-c"/></svg></button><button class="ib" aria-label="Align right"><svg class="i-16"><use href="#al-r"/></svg></button><i class="vr thin"></i>
              <button class="ib" aria-label="Decrease indent"><svg class="i-16"><use href="#outdent"/></svg></button><button class="ib" aria-label="Increase indent"><svg class="i-16"><use href="#indent"/></svg></button>
            </div>
          </div>
          <div class="rows wrapcol">
            <button class="line"><svg class="i-16"><use href="#wrap"/></svg>Wrap Text</button>
            <button class="line off"><svg class="i-16"><use href="#merge"/></svg>Merge &amp; Center<svg class="i-10 far"><use href="#chev-d"/></svg></button>
          </div>
        </div>
        <div class="g-label">Alignment<svg><use href="#launch"/></svg></div>
      </div>
      <div class="group g-num">
        <div class="g-body rows">
          <div class="line"><span class="combo w-num"><select aria-label="Number format"><option>Date</option></select><svg class="i-10"><use href="#chev-d"/></svg></span></div>
          <div class="line">
            <button class="ib" aria-label="Accounting"><svg class="i-16"><use href="#money"/></svg></button><svg class="i-10"><use href="#chev-d"/></svg>
            <button class="ib gap" aria-label="Percent"><svg class="i-16"><use href="#percent"/></svg></button><button class="ib" aria-label="Comma"><svg class="i-16"><use href="#comma"/></svg></button><i class="vr thin"></i>
            <button class="ib" aria-label="Increase decimal"><svg class="i-16"><use href="#dec-more"/></svg></button><button class="ib" aria-label="Decrease decimal"><svg class="i-16"><use href="#dec-less"/></svg></button>
          </div>
        </div>
        <div class="g-label">Number<svg><use href="#launch"/></svg></div>
      </div>
      <div class="group g-styles">
        <div class="g-body">
          <button class="big w-cf"><svg class="ic"><use href="#cond"/></svg>Conditional<span>Formatting<svg class="i-10"><use href="#chev-d"/></svg></span></button>
          <button class="big w-ft"><svg class="ic"><use href="#ftable"/></svg>Format as<span>Table<svg class="i-10"><use href="#chev-d"/></svg></span></button>
          <div class="gallery">
            <div class="swatches"><button class="s-normal">Normal</button><button class="s-bad">Bad</button><button class="s-good">Good</button><button class="s-neutral">Neutral</button><button class="s-calc">Calculation</button><button class="s-check">Check Cell</button></div>
            <div class="g-scroll"><button class="off" aria-label="Up"><svg class="i-10"><use href="#chev-u"/></svg></button><button aria-label="Down"><svg class="i-10"><use href="#chev-d"/></svg></button><button aria-label="More"><svg class="i-10"><use href="#custom"/></svg></button></div>
          </div>
        </div>
        <div class="g-label">Styles</div>
      </div>
      <div class="group g-cells">
        <div class="g-body">
          <button class="big"><svg class="ic"><use href="#insert"/></svg>Insert<svg class="i-10"><use href="#chev-d"/></svg></button>
          <button class="big"><svg class="ic"><use href="#delete"/></svg>Delete<svg class="i-10"><use href="#chev-d"/></svg></button>
          <button class="big"><svg class="ic"><use href="#format"/></svg>Format<svg class="i-10"><use href="#chev-d"/></svg></button>
        </div>
        <div class="g-label">Cells</div>
      </div>
      <div class="group g-edit">
        <div class="g-body">
          <div class="stack">
            <button><svg class="i-16"><use href="#sigma"/></svg>AutoSum<svg class="i-10 far"><use href="#chev-d"/></svg></button>
            <button><svg class="i-16"><use href="#filldown"/></svg>Fill<svg class="i-10"><use href="#chev-d"/></svg></button>
            <button><svg class="i-16"><use href="#eraser"/></svg>Clear<svg class="i-10"><use href="#chev-d"/></svg></button>
          </div>
          <button class="big"><svg class="ic"><use href="#sort"/></svg>Sort &amp;<span>Filter<svg class="i-10"><use href="#chev-d"/></svg></span></button>
          <button class="big"><svg class="ic"><use href="#find"/></svg>Find &amp;<span>Select<svg class="i-10"><use href="#chev-d"/></svg></span></button>
        </div>
        <div class="g-label">Editing</div>
      </div>
      <div class="group g-add"><div class="g-body"><button class="big"><svg class="ic"><use href="#addins"/></svg>Add-ins</button></div><div class="g-label">Add-ins</div></div>
      <div class="group g-add"><div class="g-body"><button class="big"><svg class="ic"><use href="#analyze"/></svg>Analyze<span>Data</span></button></div></div>
      <button class="collapse" aria-label="Collapse ribbon"><svg class="i-12"><use href="#chev-d"/></svg></button>
    </div>
    <div class="formula">
      <label class="namebox"><input value="I1543" aria-label="Name box"><svg class="i-12"><use href="#chev-d"/></svg></label>
      <span class="dots">⋮</span>
      <div class="fx"><svg class="i-14"><use href="#x-ico"/></svg><svg class="i-16"><use href="#v-ico"/></svg><em>fx</em><svg class="i-10"><use href="#chev-d"/></svg></div>
      <div class="fbar"><textarea aria-label="Formula bar">19/10/2020</textarea><svg class="i-12"><use href="#chev-u"/></svg></div>
    </div>
    <div class="grid-area">
      <div class="sheet">
        <table class="cells">
          <colgroup><col class="c0"><col class="c1"><col class="c2"><col class="c3"><col class="c4"><col class="c5"><col class="c6"><col class="c7"><col class="c8"><col class="c9"><col class="c10"><col class="c11"><col class="c12"><col class="c13"><col></colgroup>
          <thead><tr>
            <th class="corner"></th>
            <th><div>crop_type<button aria-label="Filter"><svg><use href="#funnel"/></svg></button></div></th>
            <th><div>crop_variety<button aria-label="Filter"><svg><use href="#dd"/></svg></button></div></th>
            <th><div>sowing_date<button aria-label="Filter"><svg><use href="#dd"/></svg></button></div></th>
            <th><div>harvest_year<button aria-label="Filter"><svg><use href="#funnel"/></svg></button></div></th>
            <th><div>harvest_date<button aria-label="Filter"><svg><use href="#dd"/></svg></button></div></th>
            <th><div>total_yield<button aria-label="Filter"><svg><use href="#funnel"/></svg></button></div></th>
            <th><div>residual_moisture<button aria-label="Filter"><svg><use href="#dd"/></svg></button></div></th>
            <th><div>fertilization_date<button aria-label="Filter"><svg><use href="#dd"/></svg></button></div></th>
            <th><div>fertilizer<button aria-label="Filter"><svg><use href="#dd"/></svg></button></div></th>
            <th><div>fertilizer_quantity<button aria-label="Filter"><svg><use href="#dd"/></svg></button></div></th>
            <th><div>tillage<button aria-label="Filter"><svg><use href="#dd"/></svg></button></div></th>
            <th><div>irrigation<button aria-label="Filter"><svg><use href="#dd"/></svg></button></div></th>
            <th><div>field_ID<button aria-label="Filter"><svg><use href="#funnel-s"/></svg></button></div></th>
            <th><div>field_coordinates</div></th>
          </tr></thead>
          <tbody>
            <tr class="cut"><th>285</th><td>Wheat (winter)</td><td>Asano</td><td>28/09/2016</td><td>2017</td><td>16/08/2017</td><td>76.5</td><td>12.5</td><td><div>17.03.2017<br>05.04.2017<br>16.05.2017</div></td><td><div>SSA + KAS<br>Harnstoff<br>Harnstoff</div></td><td><div>1.5 dt<br>1.4 dt<br>1.5 dt</div></td><td>not turning</td><td>no</td><td>55</td><td>50.33433, 8.13189</td></tr>
            <tr class="alt l3"><th>286</th><td>Wheat (winter)</td><td>Tobak</td><td>03/10/2015</td><td>2016</td><td></td><td>89.1</td><td>13.0</td><td>16.03.2016<br>12.04.2016<br>12.05.2016</td><td>SSA + Harnstoff<br>Harnstoff<br>Harnstoff</td><td>1.5 dt<br>1.93 dt<br>1.21 dt</td><td>not turning</td><td>no</td><td>55</td><td>50.33433, 8.13189</td></tr>
            <tr class="l2"><th>558</th><td>Wheat (winter)</td><td>Reform</td><td>17/11/2020</td><td>2021</td><td>13/08/2021</td><td>91.35</td><td>14.8</td><td>23.03.2021<br>29.04.2021</td><td>Ammonn. Harnstofflösung, Enso<br>Ammonn. Harnstofflösung + Schwefel</td><td>2.48 dt<br>1.85 dt</td><td></td><td>no</td><td>133</td><td>51.03552, 6.73079</td></tr>
            <tr class="alt l3"><th>561</th><td>Wheat (winter)</td><td>Reform</td><td>18/10/2017</td><td>2018</td><td>15/07/2018</td><td>80.5</td><td>14.0</td><td>24.03.2018<br>10.05.2018<br>25.05.2018</td><td>Ammonn. Harnstofflösung, Enso<br>Ammonn. Harnstofflösung, Enso<br>Kalkammonsalpeter 27</td><td>2.36 dt<br>1.26 dt<br>2.17 dt</td><td></td><td>no</td><td>133</td><td>51.03552, 6.73079</td></tr>
            <tr class="l5"><th>1533</th><td>Wheat (winter)</td><td>Kashmir</td><td>18/10/2018</td><td>2019</td><td></td><td>110.0</td><td>14.0</td><td>26.10.2018<br>26.10.2018<br>22.01.2019<br>29.03.2019<br>29.05.2019</td><td>AKRA-Kombi Granulat<br>Wigor S<br>60er Kali<br>AHL + Borsäure<br>AHL</td><td>2.2 dt<br>0.8 dt<br>2.0 dt<br>300.0 l + 4.5 kg (/ha)<br>38.0 l</td><td>not turning</td><td>no</td><td>506</td><td>50.84196982877384</td></tr>
            <tr class="alt l7"><th>1535</th><td>Wheat (winter)</td><td>LG Imposanto</td><td>03/11/2016</td><td>2017</td><td></td><td>94.6</td><td>14.0</td><td>24.11.2016<br>26.11.2016<br>30.11.2016<br>20.01.2017<br>15.02.2017<br>01.04.2017<br>29.05.2017</td><td>Mangansulfat<br>Wigor S<br>AKRA-Kombi Granulat<br>60er Kali<br>Magnosiet K17<br>AHL + Borsäure<br>AHL</td><td>0.01 dt<br>0.5 dt<br>2.0 dt<br>1.0 dt<br>2.0 dt<br>300.0 l + 4.5 kg (/ha)<br>42.0 l</td><td>not turning</td><td>no</td><td>506</td><td>50.84196982877384</td></tr>
            <tr class="l6"><th>1543</th><td>Wheat (winter)</td><td>Filon</td><td>19/10/2020</td><td>2021</td><td></td><td>92.0</td><td>14.0</td><td>31.10.2020<br>31.10.2020<br>11.02.2021<br>11.02.2021<br>23.03.2021<br>18.05.2021</td><td>Wigor S+B<br>AKRA-Kombi Granulat<br>60er Kali<br>Magnosiet K17<br>AHL + Borsäure<br>AHL</td><td>0.9 dt<br>2.0 dt<br>1.0 dt<br>2.0 dt<br>280.0 l + 4.1 kg (/ha)<br>130.0 l</td><td>not turning</td><td>no</td><td>508</td><td>50.83172962606663</td></tr>
            <tr class="alt l6"><th>1546</th><td>Wheat (winter)</td><td>Opal</td><td>18/10/2017</td><td>2018</td><td></td><td>96.0</td><td>14.0</td><td>06.02.2018<br>06.02.2018<br>14.04.2018<br>14.03.2018<br>01.04.2018<br>22.05.2018</td><td>Wigor S<br>AKRA-Kombi Granulat<br>60er Kali<br>Magnosiet K17<br>AHL + Borsäure<br>AHL</td><td>0.4 dt<br>2.0 dt<br>1.5 dt<br>2.0 dt<br>240.0 l + 4.5 kg (/ha)<br>180.0 l</td><td>not turning</td><td>no</td><td>508</td><td>50.83172962606663</td></tr>
            <tr class="l6"><th>1548</th><td>Wheat (winter)</td><td>Sheriff</td><td>29/10/2015</td><td>2016</td><td></td><td>84.2</td><td>14.0</td><td>18.01.2016<br>18.01.2016<br>14.03.2016<br>14.03.2016<br>01.04.2016<br>29.05.2016</td><td>Wigor S<br>AKRA-Kombi Granulat<br>60er Kali<br>Magnosiet K17<br>AHL + Borsäure<br>AHL</td><td>0.5 dt<br>2.5 dt<br>1.5 dt<br>1.5 dt<br>300.0 l + 4.5 kg (/ha)<br>42.0 l</td><td>not turning</td><td>no</td><td>508</td><td>50.83172962606663</td></tr>
            <tr class="alt"><th>1558</th><td>Wheat (winter)</td><td></td><td></td><td>2021</td><td></td><td>96.0</td><td></td><td></td><td></td><td></td><td>turning</td><td>no</td><td>517</td><td>51.3413176, 6.4313</td></tr>
            <tr><th>1559</th><td>Wheat (winter)</td><td></td><td></td><td>2019</td><td></td><td>90.0</td><td></td><td></td><td></td><td></td><td>turning</td><td>no</td><td>517</td><td>51.3413176, 6.4313</td></tr>
            <tr class="blank"><th>1636</th><td></td><td></td><td></td><td></td><td></td><td></td><td></td><td></td><td></td><td></td><td></td><td></td><td></td><td></td></tr>
            <tr class="blank"><th>1637</th><td></td><td></td><td></td><td></td><td></td><td></td><td></td><td></td><td></td><td></td><td></td><td></td><td></td><td></td></tr>
            <tr class="blank"><th>1638</th><td></td><td></td><td></td><td></td><td></td><td></td><td></td><td></td><td></td><td></td><td></td><td></td><td></td><td></td></tr>
            <tr class="blank"><th>1639</th><td></td><td></td><td></td><td></td><td></td><td></td><td></td><td></td><td></td><td></td><td></td><td></td><td></td><td></td></tr>
            <tr class="blank"><th>1640</th><td></td><td></td><td></td><td></td><td></td><td></td><td></td><td></td><td></td><td></td><td></td><td></td><td></td><td></td></tr>
            <tr class="blank"><th></th><td></td><td></td><td></td><td></td><td></td><td></td><td></td><td></td><td></td><td></td><td></td><td></td><td></td><td></td></tr>
          </tbody>
        </table>
      </div>
      <div class="vscroll"><span>▲</span><i></i><span>▼</span></div>
    </div>
    <div class="sheets">
      <svg class="i-10 dim"><use href="#chev-l"/></svg><svg class="i-10 dim"><use href="#chev-r"/></svg>
      <div class="sheet-tabs"><button class="on"><span>field data</span></button><button>data overview</button><button>contact data_FARMERS</button></div>
      <button class="plus" aria-label="New sheet">+</button>
      <div class="hscroll-wrap"><span>⋮</span><div class="hscroll"><span>◀</span><i></i><span>▶</span></div></div>
    </div>
    <footer class="e-status">
      <span>Ready</span>
      <b><svg class="i-16"><use href="#access"/></svg>Accessibility: Investigate</b>
      <div class="e-views">
        <button class="disp"><svg class="i-14"><use href="#display"/></svg>Display Settings</button>
        <button class="v on" aria-label="Normal"><svg class="i-14"><use href="#v-grid"/></svg></button>
        <button class="v" aria-label="Page layout"><svg class="i-14"><use href="#v-page"/></svg></button>
        <button class="v" aria-label="Page break"><svg class="i-14"><use href="#v-break"/></svg></button>
        <span class="sign">−</span><input type="range" min="0" max="100" value="46" aria-label="Zoom"><span class="sign">+</span><span class="pct">90%</span>
      </div>
    </footer>
  </div>
  <footer class="taskbar small">
    <div class="apps">
      <button aria-label="Start"><svg class="i-16"><use href="#win"/></svg></button>
      <button aria-label="Search"><svg class="i-24"><use href="#lens"/></svg></button>
      <button aria-label="Task view"><svg class="i-16"><use href="#taskview"/></svg></button>
      <button class="active" aria-label="File Explorer"><svg><use href="#explorer"/></svg></button>
      <button aria-label="Snipping Tool"><svg><use href="#snip"/></svg></button>
      <button aria-label="Outlook"><svg><use href="#outlook"/></svg></button>
      <button aria-label="Chrome"><svg><use href="#chrome"/></svg></button>
      <button class="open" aria-label="PyCharm"><svg><use href="#pycharm"/></svg></button>
      <button class="open" aria-label="Excel"><svg><use href="#excel"/></svg></button>
      <button class="open" aria-label="Notepad"><svg><use href="#notepad"/></svg></button>
      <button class="open" aria-label="Command Prompt"><svg><use href="#cmd"/></svg></button>
    </div>
    <div class="clock"><span>13:48</span><span>14/08/2024</span></div>
  </footer>
</section>
</main>
</body>
</html>
```

FILE: styles.css
```css
*{box-sizing:border-box}
body{margin:0;font-family:"Open Sans","Noto Sans","Noto Sans CJK SC",sans-serif;color:#000;background:#fff}
button,input,select,textarea{font:inherit;color:inherit;background:none;border:0;padding:0;margin:0;outline:0}
input[type=search]{appearance:none}
input{min-width:0}
button{display:flex;align-items:center;justify-content:center;white-space:nowrap}
svg{display:block;flex:none;overflow:visible}
.defs{position:absolute;width:0;height:0}
ul{list-style:none;margin:0;padding:0}
a{color:inherit;text-decoration:none}
.i-10{width:10px;height:10px}
.i-12{width:12px;height:12px}
.i-14{width:14px;height:14px}
.i-16{width:16px;height:16px}
.i-18{width:18px;height:18px}
.i-20{width:20px;height:20px}
.i-24{width:24px;height:24px}
.i-folder{width:14px;height:20px}
.i-doc{width:18px;height:22px}
.off{color:#b3b3b3}
.dim{color:#777}

.screens{display:grid;grid-template-columns:1fr 1fr;min-height:100vh}
.screen{display:flex;flex-direction:column;min-width:0}

/* File Explorer */
.explorer{flex:1;display:flex;flex-direction:column;font-size:17px;background:#fff}
.x-title{display:flex;align-items:center;height:34px;padding-left:4px}
.x-title .tick{width:1px;height:20px;background:#888;margin:0 12px}
.x-title .i-doc{margin:0 16px 0 8px}
.x-title .i-10{margin-left:16px}
.x-title .tick+h1{margin-left:-4px}
.x-title .dark+.tick{margin-left:16px}
.dark{color:#222}
h1{font-size:17px;font-weight:400;margin:0}
.win-controls{display:flex;margin-left:auto}
.win-controls button{width:70px;height:34px}
.win-controls button:last-child{width:68px}
.x-tabs{display:flex;height:35px;border-bottom:1px solid #dadbdc;color:#333;font-size:16px}
.x-tabs>button{margin-left:40px}
.x-tabs>.file{width:84px;margin:0 -20px 0 0;background:#0063b1;color:#fff}
.x-help{display:flex;align-items:center;gap:12px;margin-left:auto;padding-right:5px;color:#888}
.help{width:22px;height:22px;border-radius:50%;background:#0069c8;color:#fff;font-size:16px}
.x-address{display:flex;align-items:center;gap:13px;padding:7px 12px 10px 0}
.x-nav{display:flex;width:145px;color:#666}
.x-nav button{width:46px;padding-left:10px}
.x-nav .off{color:#ccc}
.x-nav .slim{width:24px;padding:0}
.x-nav .slim+.slim{width:36px}
.x-path{flex:1;display:flex;align-items:center;gap:16px;height:34px;border:1px solid #d9d9d9;padding-left:5px;color:#111}
.x-path>.push{margin-left:auto;color:#555;margin-right:-12px}
.crumb{width:8px;height:12px;margin:0 -3px 0 -1px;color:#777}
.x-path .i-folder+.crumb{margin-left:2px}
.x-path a{margin:0 -2px 0 0}
.reload{width:26px;height:32px;border-left:1px solid #d9d9d9;color:#555}
.x-search{display:flex;align-items:center;width:514px;height:34px;border:1px solid #d9d9d9;padding:0 12px 0 10px;color:#555}
.x-search input{flex:1}
.x-search input::placeholder{color:#666;opacity:1}
.x-body{flex:1;display:flex}
.tree{width:318px;padding-top:24px;border-right:1px solid #ececec}
.tree ul{margin-bottom:12px}
.tree li{display:flex;align-items:center;gap:6px;height:36px;padding-left:49px;margin-right:3px;white-space:nowrap;overflow:hidden}
.tree li.root{padding-left:37px}
.tree li svg{width:22px;height:20px}
.tree li .pin{width:16px;height:15px;margin:0 4px 0 auto}
.tree .current{background:#d9d9d9}
.files-pane{flex:1;padding-left:23px}
.files{border-collapse:collapse;table-layout:fixed;width:1018px}
.f-name{width:437px}.f-date{width:243px}.f-type{width:203px}
.files th{position:relative;height:41px;padding:1px 0 0 9px;text-align:left;font-weight:400;color:#43597a;border-right:1px solid #e5e5e5}
.files th:first-child{padding-left:5px}
.sorted{position:absolute;left:210px;top:-1px;width:12px;height:12px;color:#666}
.files tbody::before{content:"";display:block;height:11px}
.files td{height:32px;padding:0 0 2px 10px;color:#6d6d6d}
.files td:first-child{display:flex;align-items:center;gap:12px;color:#000}
.files td:last-child{border-right:5px solid #fff}
.files .selected td:first-child{padding-bottom:0}
.selected td{background:#cce8ff}
.rename{width:237px;height:32px;margin-left:-6px;padding:0 0 2px 5px;border:2px solid #000;background:#fff}
.x-status{display:flex;height:34px;padding-left:22px;color:#1e395b}
.x-status>span{display:flex;align-items:center;height:26px;margin:4px 17px 0 0;padding-right:17px;border-right:1px solid #e8e8e8}
.x-views{display:flex;margin-left:auto;padding-right:8px}
.x-views button{width:33px}
.x-views svg{width:22px;height:22px}
.x-views .on{border:1px solid #26a0da;background:#cbe8f6}

/* Taskbars */
.taskbar{display:flex;height:60px;background:linear-gradient(90deg,#223840,#1f3340 55%,#1b2742 80%,#1b2742);color:#fff}
.start{width:72px}
.t-search{display:flex;align-items:center;gap:16px;width:432px;border:2px solid #bdbdbd;background:#f2f2f2;padding-left:16px;color:#222;font-size:21px}
.t-search svg{width:25px;height:25px}
.t-search input::placeholder{color:#222;opacity:1}
.apps{display:flex;gap:2px;padding-left:2px}
.apps button{width:73px;padding-top:1px}
.apps button svg{width:34px;height:32px}
.apps button svg.i-36{width:36px;height:36px}
.apps button svg.i-24{width:24px;height:24px}
.apps button svg.i-16{width:16px;height:16px}
.apps .active{background:#4c5f68;box-shadow:inset 0 -3px #76b9ed}
.apps .open{background:linear-gradient(#76b9ed,#76b9ed) center bottom/61px 3px no-repeat}
.tray{display:flex;margin-left:auto;padding-right:7px;border-right:1px solid #6d7688;margin-right:6px;font-size:18px}
.tray>button{width:36px}
.tray>.dax{width:auto;gap:13px;margin-right:29px;font-size:19px}
.dax svg{width:34px;height:34px}
.tray>.ime{font-size:24px}
.tray>.ime2{width:54px}
.ime2 span{background:#fff;color:#111;font-size:20px;line-height:24px;width:23px}
.clock{display:flex;flex-direction:column;align-items:center;justify-content:center;width:108px;font-size:17px;line-height:28px}
.tray>.notes{position:relative;width:68px}
.notes b{position:absolute;left:34px;top:29px;width:24px;height:24px;border:1px solid #888;border-radius:50%;background:#222a35;font-size:15px;line-height:21px;font-weight:600}
.taskbar.small{height:40px}
.small .apps{gap:1px;padding-left:0}
.small .apps button{width:48px}
.small .apps button svg{width:24px;height:22px}
.small .apps button svg.i-16{width:16px;height:16px}
.small .apps .open{background-size:40px 2px}
.small .apps .active{box-shadow:inset 0 -2px #76b9ed}
.small .clock{width:70px;margin-left:auto;font-size:11px;line-height:18px}

/* Excel */
.excel{flex:1;display:flex;flex-direction:column;background:#efefef;font-size:12px;color:#242424}
.e-title{display:grid;grid-template-columns:1fr 368px 1fr;align-items:start;height:50px;padding-left:16px;color:#b3b3b3}
.e-quick{display:flex;align-items:center;height:48px;gap:14px}
.autosave{display:flex;align-items:center;gap:7px;margin-right:-1px}
.switch{display:flex;align-items:center;justify-content:space-between;width:53px;height:20px;padding:0 9px 0 5px;border:1px solid #bbb;border-radius:10px;background:#fff}
.switch input{position:absolute;opacity:0}
.switch i{width:14px;height:14px;border-radius:50%;background:#b8b8b8}
.pair{display:flex;align-items:center;gap:4px}
.doc-name{display:flex;align-items:center;gap:4px;margin-left:11px}
.e-search{display:flex;align-items:center;gap:12px;height:33px;margin-top:8px;padding-left:21px;border:1px solid #cfcfcf;border-bottom-color:#bbb;border-radius:3px}
.e-search input::placeholder{color:#b3b3b3;opacity:1}
.e-user{display:flex;align-items:center;justify-content:flex-end;height:48px}
.e-user button{width:48px;height:48px}
.e-user .shut{background:#e81123;color:#fff}
.avatar{width:24px;height:24px;margin:0 12px 0 9px;border-radius:50%;background:#0078d4;color:#fff;font-size:11px;line-height:24px;text-align:center}
.e-tabs{display:flex;align-items:center;gap:23px;height:28px;padding:0 12px 0 22px}
.e-tabs>button{height:24px;border:solid transparent;border-width:2px 0}
.e-tabs .on{font-weight:600;border-bottom-color:#0f703b}
.e-tabs .context{color:#0f703b}
.e-share{display:flex;gap:8px;margin-left:auto}
.e-share button{height:24px;border-radius:3px;gap:5px}
.e-share .comments{width:90px;border:1px solid #8a8a8a;background:#fff}
.share{width:71px;background:#107c41;color:#fff}
.ribbon{display:flex;height:100px;margin:0 8px;padding:5px 9px 3px 0;border-radius:6px;background:#fff;box-shadow:0 1px 3px #0004;font-size:11px}
.group{display:flex;flex-direction:column;border-right:1px solid #d1d1d1;padding:0 7px}
.g-body{flex:1;display:flex}
.g-label{position:relative;line-height:14px;text-align:center}
.g-label svg{position:absolute;right:-5px;top:3px;width:9px;height:9px}
.g-clip{width:175px}.g-font{width:236px}.g-align{width:295px}.g-num{width:162px}.g-styles{width:491px}.g-cells{width:147px}.g-edit{width:208px}.g-add{width:63px}
.g-cells,.g-edit{padding:0 4px}
.g-add{padding:0}
.big{flex-direction:column;justify-content:flex-start;width:46px;line-height:16px}
.g-add .big{width:100%}
.big.w-cf{width:74px}.big.w-ft{width:60px}
.big .ic{width:30px;height:27px;margin:6px 0 4px}
.big span{display:flex;align-items:center;gap:2px}
.big .i-10{margin-top:3px}
.big span .i-10{margin:0}
.stack button{height:26px;gap:4px}
.g-clip .stack{margin-left:7px}
.g-clip .big{margin-left:3px}
.g-edit .stack{width:98px;padding-left:8px}
.far{margin-left:10px}
.rows{display:flex;flex-direction:column;gap:8px;padding-top:7px}
.line{display:flex;align-items:center;justify-content:flex-start;height:24px}
.combo{display:flex;align-items:center;height:24px;padding-right:3px;border:1px solid #8a8a8a;border-radius:3px}
.combo select{flex:1;appearance:none;padding-left:2px;min-width:0}
.w-font{width:122px;margin-right:3px}.w-size{width:43px;margin-right:4px}.w-num{width:146px}
.ib{width:24px;height:24px;font-size:14px}
.g-font .ib{width:25px}
.g-font em{font-family:"Liberation Serif",serif}
.g-font .line>.i-10+.ib{margin-left:4px}
.ib.on{border:1px solid #666;border-radius:3px;background:#e8e8e8}
.vr{width:1px;height:24px;margin:0 4px;background:#d1d1d1}
.g-align .ib{margin-right:2px}
.vr.thin{margin:0 2px 0 0}
.wrapcol{margin-left:3px;padding-left:10px;border-left:1px solid #d1d1d1}
.g-align .rows:first-child{width:134px}
.wrapcol .line{gap:4px}
.ib.gap{margin:0 2px 0 5px}
.gallery{display:flex;width:336px;height:62px;margin-top:7px;margin-left:2px;border:1px solid #d1d1d1;border-radius:4px}
.swatches{display:grid;grid-template-columns:repeat(3,1fr);gap:6px;flex:1;padding:5px 4px 5px 4px;font-size:13px;line-height:16px}
.swatches button{justify-content:flex-start;padding-left:4px}
.s-normal{outline:1px solid #666;outline-offset:2px}
.s-bad{background:#ffc7ce;color:#9c0006}
.s-good{background:#c6efce;color:#006100}
.s-neutral{background:#ffeb9c;color:#9c5700}
.s-calc{background:#f2f2f2;color:#fa7d00;font-weight:600;border:1px solid #7f7f7f}
.s-check{background:#a5a5a5;color:#fff;font-weight:600;border:3px double #3f3f3f}
.g-scroll{display:grid;grid-template-rows:1fr 1fr 1fr;width:15px;border-left:1px solid #888}
.g-scroll button+button{border-top:1px solid #888}
.collapse{margin:auto 0 8px auto}
.formula{display:flex;align-items:flex-start;height:81px;padding:8px 9px 0 8px}
.namebox,.fx,.fbar{display:flex;align-items:center;height:25px;border:1px solid #d1d1d1;border-radius:4px;background:#fff;font-size:12px}
.namebox{width:101px;padding:0 8px 0 6px}
.namebox input{flex:1}
.dots{width:21px;line-height:25px;text-align:center}
.fx{width:85px;gap:10px;padding:0 3px 0 7px;margin-right:5px;color:#888}
.fx em{font:italic 18px "Liberation Serif",serif;color:#222;margin-right:-8px}
.fbar{flex:1;height:65px;align-items:flex-start;padding:4px 4px 0 10px}
.fbar textarea{flex:1;height:50px;resize:none;line-height:17px}
.grid-area{display:flex;flex:1 0 auto}
.sheet{flex:1;overflow:hidden;min-width:0;height:847px;border-right:1px solid #ddd;border-bottom:1px solid #ccc}
.cells{width:100%;table-layout:fixed;border-collapse:separate;border-spacing:0;font-size:12px;line-height:17px}
.c0{width:33px}.c1{width:163px}.c2{width:178px}.c3{width:119px}.c4{width:101px}.c5{width:105px}.c6{width:103px}.c7{width:121px}.c8{width:142px}.c9{width:237px}.c10{width:170px}.c11{width:111px}.c12{width:137px}.c13{width:70px}
.cells thead th{height:17px;padding:0;font-weight:400;color:#444;border-bottom:2px solid #999;overflow:hidden}
.cells thead div{display:flex;justify-content:space-between;height:15px;line-height:15px;padding-left:4px;white-space:nowrap}
.cells thead th:nth-child(2) div{padding-left:0;text-indent:-3px}
.cells thead button{flex:none;width:17px;height:16px;border:1px solid #a0a7b0;background:#fff;text-indent:0}
.cells thead svg{width:12px;height:10px}
.corner{background:linear-gradient(135deg,transparent 70%,#ccc 70%)}
.cells td{height:17px;padding:0 0 0 3px;overflow:hidden;white-space:nowrap;color:#000;background:#ededed;border:solid #fff;border-width:0 1px 1px 0;line-height:17px}
.cells td:nth-child(2){text-indent:-6px}
.cells tr.alt td{background:#dbdbdb}
.cells tbody th{padding:0 2px 0 0;text-align:right;vertical-align:bottom;font-weight:400;color:#00f;border-right:1px solid #999;border-bottom:1px solid #ccc;line-height:16px}
.cells .blank td{background:#fff;border-color:#ddd}
.cells .blank th{color:#444}
.cells .cut td,.cut th{height:47px}
.cut td div{display:flex;flex-direction:column;justify-content:flex-end;height:46px;overflow:hidden}
.cells .l2 td{height:35px}.cells .l3 td{height:52px}.cells .l5 td{height:87px}.cells .l7 td{height:123px}.cells .l6 td{height:104px}
.vscroll{display:flex;flex-direction:column;align-items:center;width:20px;font-size:11px;line-height:16px;color:#666;background:#f3f3f3}
.vscroll i{width:9px;height:613px;margin:190px 0 12px;border-radius:5px;background:#707070}
.sheets{display:flex;align-items:center;height:32px;padding:0 20px 0 27px;font-size:13px}
.sheets>svg+svg{margin-left:22px}
.sheet-tabs{display:flex;align-items:center;align-self:stretch;margin-left:47px}
.sheet-tabs button{height:20px;padding:0 15px;border-right:1px solid #ccc}
.sheet-tabs .on{align-self:flex-start;height:28px;padding:0 8px;margin-right:4px;border:0;border-radius:0 0 5px 5px;background:#fff;font-weight:600;font-size:12px}
.sheet-tabs .on span{border-bottom:2px solid #107c41}
.plus{margin-left:42px;font-size:20px}
.hscroll-wrap{display:flex;align-items:center;gap:12px;margin-left:auto}
.hscroll{display:flex;align-items:center;width:729px;height:17px;padding:0 4px;border-radius:8px;background:#f6f6f6;color:#666;font-size:11px}
.hscroll i{width:320px;height:9px;margin:0 auto 0 160px;border-radius:5px;background:#707070}
.e-status{display:flex;align-items:center;gap:19px;height:22px;padding:0 8px 0 11px;border-top:1px solid #fff;background:#f4f4f4;font-size:11px}
.e-status b{display:flex;align-items:center;gap:4px;font-size:10px;font-weight:600}
.e-views{display:flex;align-items:center;align-self:stretch;margin-left:auto}
.e-views .v{width:40px;align-self:stretch}
.e-views .on{background:#e0e0e0}
.disp{gap:3px;margin-right:17px;font-size:11px}
.sign{width:18px;text-align:center;font-size:14px}
.pct{width:28px;text-align:right;font-size:11px}
.e-views input{appearance:none;width:102px;height:16px;background:linear-gradient(#777,#777) center/100% 1px no-repeat}
.e-views input::-webkit-slider-thumb{appearance:none;width:5px;height:11px;background:#666}
```
